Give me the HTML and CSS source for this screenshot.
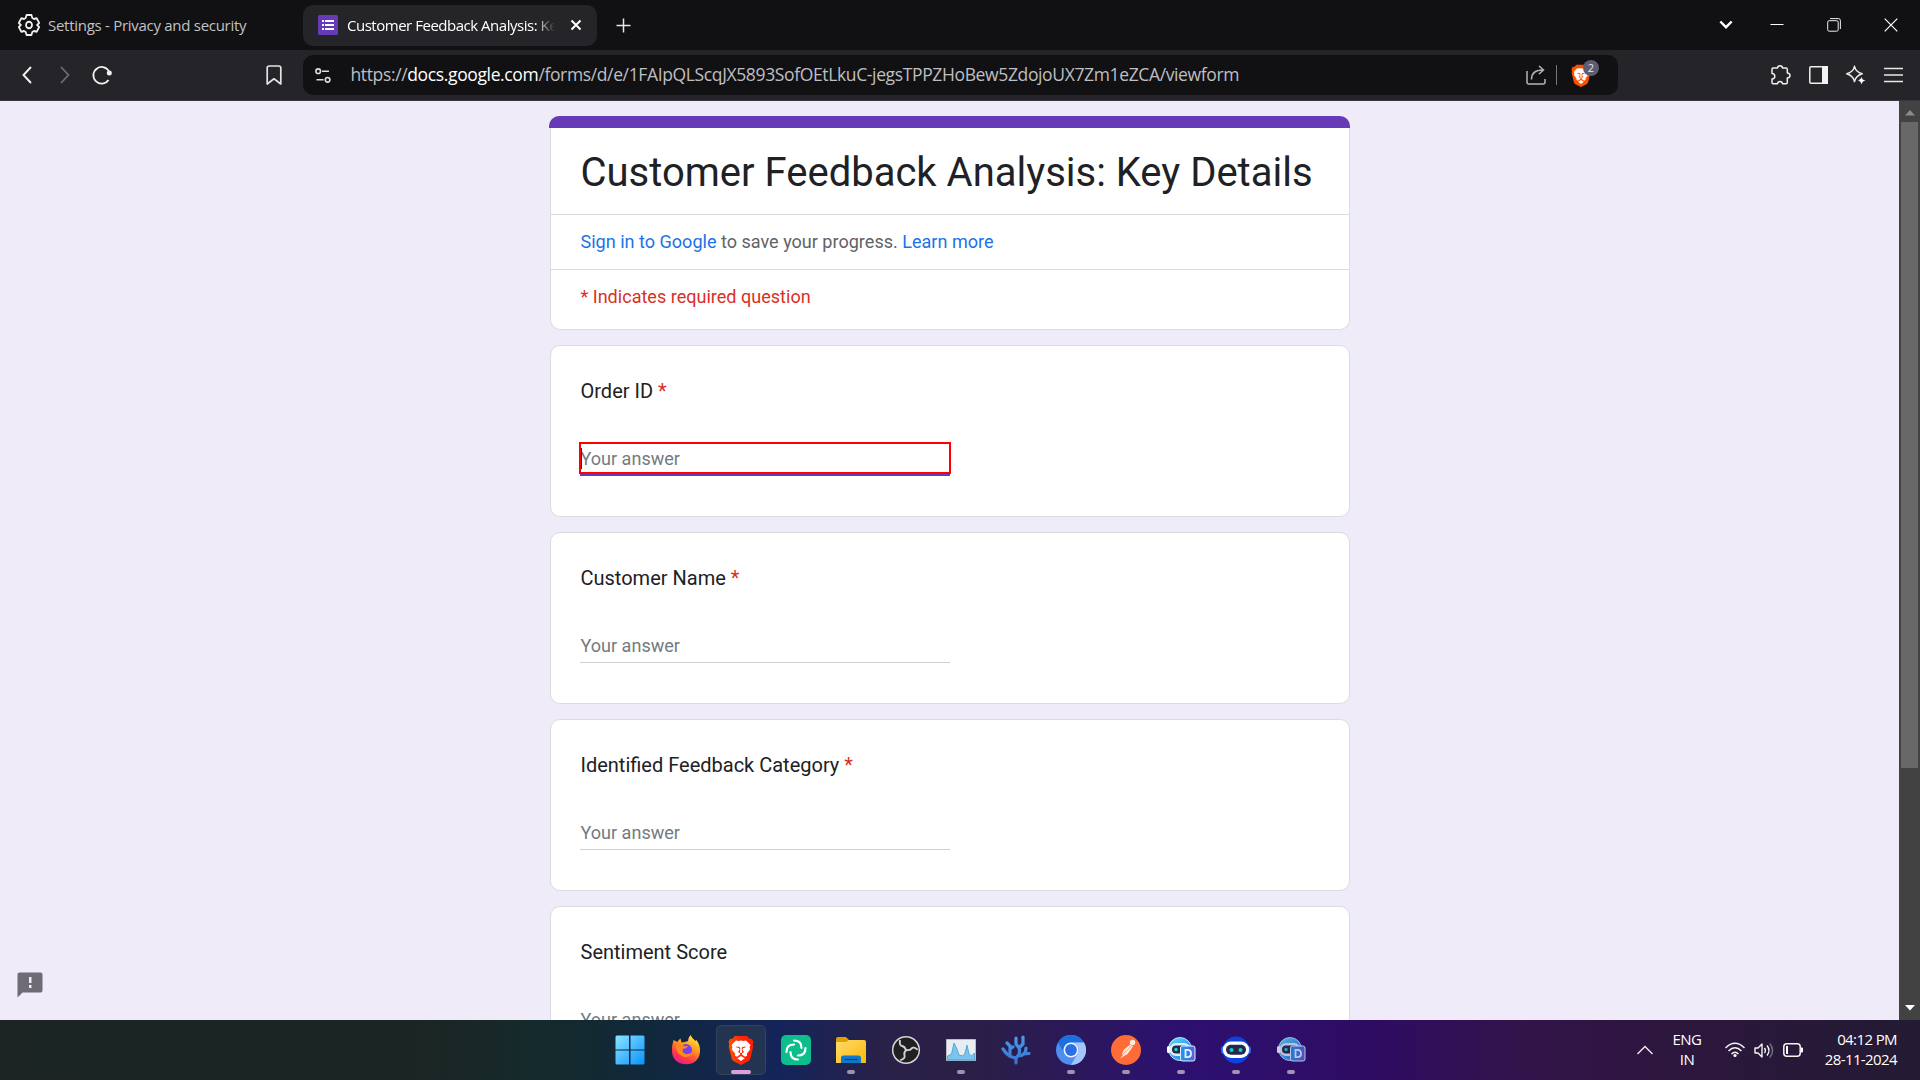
FILE: index.html
```html
<!DOCTYPE html>
<html lang="en">
<head>
<meta charset="utf-8">
<title>Customer Feedback Analysis: Key Details</title>
<link rel="stylesheet" href="styles.css">
</head>
<body>
<svg class="defs" width="0" height="0" aria-hidden="true">
  <defs>
    <linearGradient id="win" x1="0" y1="0" x2="1" y2="1"><stop offset="0" stop-color="#8be5ff"/><stop offset="1" stop-color="#0892ff"/></linearGradient>
    <linearGradient id="brave" x1="0" y1="0" x2="1" y2="0"><stop offset="0" stop-color="#ff5500"/><stop offset=".45" stop-color="#ff2a0c"/><stop offset="1" stop-color="#ff1a00"/></linearGradient>
    <linearGradient id="fox" x1=".8" y1="0" x2=".3" y2="1"><stop offset="0" stop-color="#fff14a"/><stop offset=".4" stop-color="#ff9a1f"/><stop offset=".75" stop-color="#ff3b47"/><stop offset="1" stop-color="#e8198b"/></linearGradient>
    <linearGradient id="fold" x1="0" y1="0" x2="1" y2="1"><stop offset="0" stop-color="#ffdc6b"/><stop offset="1" stop-color="#fbb808"/></linearGradient>
    <linearGradient id="bot" x1="0" y1="0" x2="1" y2="1"><stop offset="0" stop-color="#5fe0ff"/><stop offset="1" stop-color="#1673e8"/></linearGradient>
    <linearGradient id="badge" x1="0" y1="0" x2="1" y2="0"><stop offset="0" stop-color="#1a9af0"/><stop offset="1" stop-color="#5560e0"/></linearGradient>
    <linearGradient id="coral" x1="0" y1="0" x2="0" y2="1"><stop offset="0" stop-color="#4a9be8"/><stop offset="1" stop-color="#3874cf"/></linearGradient>
    <symbol id="lion" viewBox="0 0 26 30">
      <path d="M7 1h12l3 3 2-.3 1.500 3.500-.8 2 .6 2-3 12.500q-.5 1.600-2 2.600L13 30l-7.300-3.700q-1.500-1-2-2.600L.7 11.200l.6-2-.8-2L2 3.700 4 4z"/>
      <path fill="#fff" d="M8 5.500l2.500.5 2.500-.6 2.500.6 2.500-.5 4.500 4.500-1 2.500.8 1.800-3.500 4.500.3 1.700-2 1.300-3.300-2.300.2-1.200 2-1.300-1.500-2.200.3-1.500 3-1-.3-.8-3 .6-.8.900.4 4.500-1.100.500-1.100-.5.400-4.500-.8-.9-3-.6-.3.800 3 1 .3 1.500-1.500 2.200 2 1.300.2 1.200-3.300 2.300-2-1.300.3-1.700-3.500-4.500.8-1.800-1-2.500z"/>
      <path fill="#fff" d="M9.300 23.300L13 21l3.700 2.300L13 26z"/>
    </symbol>
    <symbol id="robot" viewBox="0 0 30 30">
      <circle cx="14" cy="14" r="11.500" fill="url(#bot)" stroke="#dff" stroke-width=".8"/>
      <rect x="1" y="11" width="3" height="7" rx="1.500" fill="#fff"/>
      <rect x="3.500" y="8" width="21" height="13" rx="6.500" fill="#e8edf5"/>
      <rect x="6" y="10.500" width="16" height="8" rx="4" fill="#252a48"/>
      <circle cx="10" cy="14.500" r="1.700" fill="#17d4dc"/>
      <rect x="14.500" y="11" width="14.500" height="15" rx="2" fill="url(#badge)" stroke="#e6ecff"/>
      <path d="M19.500 14.800h2q3.500 0 3.500 3.700t-3.500 3.700h-2z" fill="none" stroke="#e8f2ff" stroke-width="1.800"/>
    </symbol>
  </defs>
</svg>

<header class="tabs">
  <div class="tab">
    <svg width="22" height="24" viewBox="0 0 24 24" preserveAspectRatio="none" fill="none" stroke="#f0f0f0" stroke-width="1.900" stroke-linejoin="round"><path d="M9.300 2h5.400l.9 3 1.800 1 3-.7 2.700 4.700-2.200 2 2.200 2-2.700 4.700-3-.7-1.800 1-.9 3H9.300l-.9-3-1.800-1-3 .7L.9 14l2.200-2L.9 10l2.700-4.700 3 .7 1.800-1z"/><circle cx="12" cy="12" r="3.300"/></svg>
    <span class="tab-title settings">Settings - Privacy and security</span>
  </div>
  <div class="tab active">
    <svg width="20" height="20" viewBox="0 0 20 20"><rect width="20" height="20" rx="1.500" fill="#673ab7"/><path fill="#fff" d="M4 5h2v2H4zM7 5h9v2H7zM4 9h2v2H4zM7 9h9v2H7zM4 13h2v2H4zM7 13h9v2H7z"/></svg>
    <span class="tab-title feedback">Customer Feedback Analysis: Key Details</span>
    <svg class="tab-close" width="12" height="12" viewBox="0 0 12 12" stroke="#fff" stroke-width="2"><path d="M1.500 1.500l9 9M10.500 1.500l-9 9"/></svg>
  </div>
  <svg class="new-tab" width="15" height="15" viewBox="0 0 15 15" stroke="#e8e8e8" stroke-width="1.500"><path d="M7.500 .5v14M.5 7.500h14"/></svg>
  <div class="window-controls">
    <svg width="14" height="10" viewBox="0 0 14 10" fill="none" stroke="#fff" stroke-width="2.400"><path d="M1.300 1.500L7 7.200l5.700-5.700"/></svg>
    <svg width="14" height="14" viewBox="0 0 14 14"><path d="M.5 6.500h13" stroke="#fff"/></svg>
    <svg width="14" height="14" viewBox="0 0 14 14" fill="none" stroke="#eee"><rect x=".7" y="2.700" width="10.500" height="10.500" rx="1.500"/><path d="M3 .6h8.500q1.900 0 1.900 1.900V11"/></svg>
    <svg width="14" height="14" viewBox="0 0 14 14" stroke="#fff" stroke-width="1.200"><path d="M.7.7l12.600 12.600M13.300.7L.7 13.300"/></svg>
  </div>
</header>

<nav class="toolbar">
  <div class="nav-buttons">
    <svg width="10" height="18" viewBox="0 0 10 18" fill="none" stroke="#f2f2f2" stroke-width="1.900"><path d="M9 1L1.500 9 9 17"/></svg>
    <svg class="forward" width="10" height="18" viewBox="0 0 10 18" fill="none" stroke="#707074" stroke-width="1.700"><path d="M1 1l7.500 8L1 17"/></svg>
    <svg class="reload" width="20" height="20" viewBox="0 0 20 20"><path d="M17.300 7A8.300 8.300 0 1 0 16.500 15" fill="none" stroke="#f2f2f2" stroke-width="1.800"/><circle cx="17.300" cy="8" r="2.500" fill="#f2f2f2"/></svg>
    <svg class="bookmark" width="16" height="20" viewBox="0 0 16 20" fill="none" stroke="#e3e3e6" stroke-width="1.700" stroke-linejoin="round"><path d="M1.200 3q0-2 2-2h9.600q2 0 2 2v16L8 13.800 1.200 19z"/></svg>
  </div>
  <div class="address">
    <svg width="16" height="15" viewBox="0 0 16 15" fill="none" stroke="#dedee0" stroke-width="1.600"><circle cx="3.200" cy="3.200" r="2.300"/><path d="M7 3.200h7M1.500 11.800h7"/><circle cx="12.600" cy="11.800" r="2.300"/></svg>
    <span class="url">https://<b>docs.google.com</b>/forms/d/e/1FAIpQLScqJX5893SofOEtLkuC-jegsTPPZHoBew5ZdojoUX7Zm1eZCA/viewform</span>
    <div class="address-actions">
      <svg width="20" height="20" viewBox="0 0 20 20" fill="none" stroke="#b4b4b8" stroke-width="1.500"><path d="M1 6v11q0 2 2 2h14q2 0 2-2v-3"/><path d="M5.500 14.500q0-9.500 11-9.500M13 1l4.500 4-4.500 4"/></svg>
      <i class="divider"></i>
      <div class="shield"><svg width="20" height="23" fill="#ff5000"><use href="#lion"/></svg><span class="count">2</span></div>
    </div>
  </div>
  <div class="tools">
    <svg width="20" height="20" viewBox="0 0 20 20" fill="none" stroke="#eee" stroke-width="1.500" stroke-linejoin="round"><path d="M1 4q0-1 1-1h4.500q.2-2.200 2.500-2.200T11.500 3H15q1.300 0 1.300 1.300V8q2.700.2 2.700 2.500T16.300 13v4.500q0 1.300-1.300 1.300h-3.500q-.2-2.300-2.500-2.300t-2.500 2.300H2q-1 0-1-1V14q2.800-.2 2.800-2.800T1 8.500z"/></svg>
    <svg width="19" height="18" viewBox="0 0 19 18"><rect x=".8" y=".8" width="17.400" height="16.400" rx="1" fill="none" stroke="#eee" stroke-width="1.500"/><path d="M13 0h6v18h-6z" fill="#f3f3f3"/></svg>
    <svg width="20" height="20" viewBox="0 0 20 20"><path d="M8.500 1.300q1 5.500 7.700 7.500-6.500 2-7.700 7.700-1.200-5.700-7.700-7.700 6.700-2 7.700-7.500z" fill="none" stroke="#eee" stroke-width="1.500" stroke-linejoin="round"/><path d="M15.500 12q.6 3 4 3.500-3.400.6-4 4-.6-3.400-3.500-4 2.900-.5 3.500-3.500z" fill="#fff"/></svg>
    <svg width="19" height="16" viewBox="0 0 19 16" stroke="#e8e8e8" stroke-width="1.600"><path d="M0 1.500h19M0 8h19M0 14.500h19"/></svg>
  </div>
</nav>

<main class="page">
  <aside class="report">
    <svg width="26" height="26" viewBox="0 0 26 26"><path fill="#6f6b74" d="M2.500.5h21q2 0 2 2v16q0 2-2 2h-18l-5 5v-23q0-2 2-2z"/><path fill="#efebf8" d="M12 5h2.500v6H12zm0 8h2.500v3H12z"/></svg>
  </aside>
  <div class="form">
    <section class="card head">
      <div class="strip"></div>
      <h1 class="title">Customer Feedback Analysis: Key Details</h1>
      <p class="note"><a>Sign in to Google</a> to save your progress. <a>Learn more</a></p>
      <p class="note required">* Indicates required question</p>
    </section>
    <section class="card">
      <h2 class="question">Order ID <em>*</em></h2>
      <div class="answer focused">Your answer</div>
    </section>
    <section class="card">
      <h2 class="question">Customer Name <em>*</em></h2>
      <div class="answer">Your answer</div>
    </section>
    <section class="card">
      <h2 class="question">Identified Feedback Category <em>*</em></h2>
      <div class="answer">Your answer</div>
    </section>
    <section class="card">
      <h2 class="question">Sentiment Score</h2>
      <div class="answer">Your answer</div>
    </section>
  </div>
  <div class="scrollbar">
    <svg width="10" height="6" viewBox="0 0 10 6"><path d="M0 5.500L5 0l5 5.500z" fill="#8b8b8b"/></svg>
    <div class="thumb"></div>
    <svg width="10" height="6" viewBox="0 0 10 6"><path d="M0 0l5 5.500L10 0z" fill="#fff"/></svg>
  </div>
</main>

<footer class="taskbar">
  <div class="apps">
    <div class="app start"><svg width="30" height="30" viewBox="0 0 30 30" fill="url(#win)"><path d="M.5 2Q.5.500 2 .5h12v14H.5zM15.500.500H28q1.500 0 1.500 1.500v12.500h-14zM.5 15.500H14v14H2q-1.500 0-1.500-1.500zM15.500 15.500h14V28q0 1.500-1.500 1.500H15.500z"/></svg></div>
    <div class="app"><svg width="30" height="30" viewBox="0 0 30 30"><path fill="url(#fox)" d="M2.500 5l4 2q1-2.500 3-3.500l1 4q4-.5 6.500-1.500Q17 3 19.500 0q1.500 3.500 5 6l1-1q4 5.500 3.500 12Q27.500 29 15 29.300 2 28.500 1 17 .8 10 2.500 5z"/><circle cx="15" cy="15" r="6" fill="#7a3df0"/><path d="M5 10q5-1.500 9 1.500l3-.8q-1 3-5 3-1.500 3.500 2.300 5 4.700 1 7-2-2 6-8.300 5.300Q5 19 5 10z" fill="#ff8a1c"/></svg></div>
    <div class="app current"><svg width="26" height="30" fill="url(#brave)"><use href="#lion"/></svg><i></i></div>
    <div class="app"><svg width="30" height="30" viewBox="0 0 30 30"><rect width="30" height="30" rx="5" fill="#0dbd8b"/><g fill="none" stroke="#fff" stroke-width="2.200" stroke-linecap="round"><path id="arc" d="M13 5.500q7.500 0 7.500 7.500"/><use href="#arc" transform="rotate(90 15 15)"/><use href="#arc" transform="rotate(180 15 15)"/><use href="#arc" transform="rotate(270 15 15)"/></g></svg></div>
    <div class="app running"><svg width="30" height="30" viewBox="0 0 30 30"><path d="M0 4q0-2 2-2h8l3 3v5H0z" fill="#e0a000"/><path d="M0 7h10l3-2h15q2 0 2 2v21H0z" fill="url(#fold)"/><path d="M5 28v-5q0-2.500 2.500-2.500h15q2.500 0 2.500 2.500v5z" fill="#0f78cc"/><path d="M8.500 24.500h13" stroke="#073f78" stroke-width="1.200"/></svg><i></i></div>
    <div class="app"><svg width="30" height="30" viewBox="0 0 30 30"><circle cx="15" cy="15" r="13.300" fill="#201f22" stroke="#d6d6da" stroke-width="1.500"/><g fill="none" stroke="#d0d0d4" stroke-width="1.900"><path id="blade" d="M15 15.500q-1-4-4-4.500-3-.5-2-6"/><use href="#blade" transform="rotate(120 15 15)"/><use href="#blade" transform="rotate(240 15 15)"/></g></svg></div>
    <div class="app running"><svg width="30" height="30" viewBox="0 0 30 30"><path d="M.5 4.500h29v21H.5z" fill="#e8edf2" stroke="#b9bdc4"/><path d="M1.500 21l4-2 2.500-11 3 6 2 6 4 1 2-3 2-8 2 9 2.500 2 3-3v7H1.500z" fill="#79c5ef" stroke="#3294cd" stroke-width=".7"/></svg><i></i></div>
    <div class="app"><svg width="30" height="30" viewBox="0 0 30 30" fill="none" stroke="url(#coral)" stroke-width="3.200" stroke-linecap="round"><path d="M15 28v-5Q8 22 4 17M9 20V11L6 8M2 14l4 5M9 14l3-2M15 23q5-4 3-10l-3-4V3M18 13l4-4V2M17 21q8 0 8-8M22 19l6-.5"/></svg></div>
    <div class="app running"><svg width="30" height="30" viewBox="0 0 30 30"><circle cx="15" cy="15" r="15" fill="#508df0"/><path d="M2 7.500A15 15 0 0 1 28 7.500H15A7.500 7.500 0 0 0 8 18z" fill="#1b70df"/><path d="M28 7.500A15 15 0 0 1 15 30l6.500-11.200A7.500 7.500 0 0 0 15 7.500z" fill="#a4c6fb"/><circle cx="15" cy="15" r="7.500" fill="#eef4ff"/><circle cx="15" cy="15" r="5.900" fill="#2c6fe3"/></svg><i></i></div>
    <div class="app running"><svg width="30" height="30" viewBox="0 0 30 30"><circle cx="15" cy="15" r="15" fill="#ff6c37"/><circle cx="21.500" cy="7.500" r="2.700" fill="#fff2eb"/><path d="M19 9.500l3 2-5.500 7.500-7.500 4.500 3-3.500-1-1 1.500-4z" fill="#ffe7db"/><path d="M17 10l2.500 2-7.500 7" stroke="#ff8a60" fill="none" stroke-width=".7"/></svg><i></i></div>
    <div class="app running"><svg width="30" height="30"><use href="#robot"/></svg><i></i></div>
    <div class="app running"><svg width="30" height="30" viewBox="0 0 30 30"><circle cx="15" cy="15" r="13.500" fill="#0c43e0"/><rect y="11" width="30" height="8" rx="3" fill="#2366ff"/><rect x="1.800" y="6.500" width="26.400" height="16.500" rx="8.200" fill="#fff"/><rect x="5" y="9.800" width="20" height="10" rx="5" fill="#242849"/><circle cx="10.500" cy="15" r="2" fill="#16cbd6"/><circle cx="19.500" cy="15" r="2" fill="#16cbd6"/></svg><i></i></div>
    <div class="app running"><svg class="dim" width="30" height="30"><use href="#robot"/></svg><i></i></div>
  </div>
  <div class="tray">
    <svg width="16" height="10" viewBox="0 0 16 10" fill="none" stroke="#eee" stroke-width="1.400"><path d="M.5 9L8 1.500 15.500 9"/></svg>
    <div class="lang"><span>ENG</span><span>IN</span></div>
    <div class="status">
      <svg width="20" height="16" viewBox="0 0 20 16" fill="none" stroke="#f4f4f4" stroke-width="1.500"><path d="M.5 6Q10-3.500 19.500 6M3.500 9q6.500-6.500 13 0M6.500 12q3.500-3.500 7 0"/><circle cx="10" cy="13.500" r="1.600" fill="#fff" stroke="none"/></svg>
      <svg width="20" height="17" viewBox="0 0 20 17" fill="none" stroke="#f4f4f4" stroke-width="1.400"><path d="M1 6h3l4-4v13l-4-4H1z" stroke-linejoin="round"/><path d="M10.500 6q1.800 2.500 0 5M13 3.500q4 5 0 10"/><path d="M15.800 1.500q5.500 7 0 14" stroke="#77708a"/></svg>
      <svg width="21" height="14" viewBox="0 0 21 14"><rect x=".8" y=".8" width="16.400" height="12.400" rx="3" fill="none" stroke="#f4f4f4" stroke-width="1.500"/><path d="M3 3h2v8H3zM18 4.500h1q1 0 1 1v3q0 1-1 1h-1z" fill="#fff"/></svg>
    </div>
    <div class="clock"><span>04:12 PM</span><span>28-11-2024</span></div>
  </div>
</footer>
</body>
</html>
```

FILE: styles.css
```css
* { box-sizing: border-box; }

body {
  margin: 0;
  width: 1920px;
  height: 1080px;
  overflow: hidden;
  display: flex;
  flex-direction: column;
  font-family: "Open Sans", "Noto Sans", sans-serif;
}

svg { display: block; flex: none; }
.defs { position: absolute; }

/* Tab strip */
.tabs {
  height: 50px;
  flex: none;
  display: flex;
  align-items: center;
  background: #111113;
  color: #c2c2c4;
  font-size: 15px;
}
.tab {
  width: 303px;
  height: 41px;
  padding-left: 18px;
  display: flex;
  align-items: center;
}
.tab-title { white-space: nowrap; }
.settings { margin-left: 8px; letter-spacing: -.28px; }
.tab.active {
  width: 294px;
  padding: 0 14px 0 15px;
  border-radius: 10px;
  background: #252529;
  color: #fff;
}
.feedback {
  width: 208px;
  margin-left: 9px;
  overflow: hidden;
  letter-spacing: -.48px;
  -webkit-mask-image: linear-gradient(to right, #000 188px, transparent 208px);
  mask-image: linear-gradient(to right, #000 188px, transparent 208px);
}
.tab-close { margin-left: 15px; }
.new-tab { margin-left: 19px; }
.window-controls {
  margin-left: auto;
  padding-right: 22px;
  display: flex;
  align-items: center;
  gap: 43px;
}
.window-controls svg:first-child { margin-right: -6px; }

/* Toolbar */
.toolbar {
  height: 51px;
  flex: none;
  display: flex;
  align-items: center;
  background: #252529;
  border-bottom: 1px solid #38383c;
}
.nav-buttons { width: 303px; padding-left: 22px; display: flex; align-items: center; }
.forward { margin-left: 28px; }
.reload { margin-left: 22px; }
.bookmark { margin-left: 154px; }
.address {
  width: 1315px;
  height: 40px;
  padding-left: 12px;
  display: flex;
  align-items: center;
  border-radius: 10px;
  background: #111113;
}
.url {
  margin-left: 19.500px;
  padding-bottom: 2px;
  color: #bfbfc2;
  font-size: 17.5px;
  letter-spacing: -.365px;
  white-space: nowrap;
}
.url b { color: #fff; font-weight: 400; }
.address-actions { margin-left: auto; padding-right: 27px; display: flex; align-items: center; }
.divider { width: 1px; height: 20px; margin: 0 14px 0 10px; background: #77777b; }
.shield { position: relative; }
.count {
  position: absolute;
  left: 12px;
  top: -4px;
  width: 16px;
  height: 16px;
  border-radius: 50%;
  background: #5c5e70;
  color: #e6e6ee;
  font-size: 11px;
  line-height: 16px;
  text-align: center;
}
.tools { margin-left: auto; padding-right: 17.500px; display: flex; align-items: center; gap: 18px; }

/* Form page */
.page {
  height: 919px;
  flex: none;
  display: flex;
  overflow: hidden;
  background: #efebf8;
  font-family: Roboto, sans-serif;
}
.report { width: 550px; padding: 871px 0 0 17px; flex: none; }
.form {
  width: 800px;
  flex: none;
  padding-top: 15px;
  display: flex;
  flex-direction: column;
  gap: 15px;
}
.card {
  height: 172px;
  flex: none;
  padding: 0 29px;
  border: 1px solid #dadce0;
  border-radius: 10px;
  background: #fff;
}
.head { height: 214px; padding: 0; border-top: 0; }
.strip { height: 12px; margin: 0 -1px 0 -2px; border-radius: 10px 10px 0 0; background: #673ab7; }
.title {
  height: 86px;
  margin: 0;
  padding: 19px 29.500px 0;
  color: #202124;
  font-size: 40px;
  font-weight: 400;
  line-height: 52px;
  white-space: nowrap;
}
.note {
  height: 55px;
  margin: 0;
  padding: 14px 29.500px 0;
  border-top: 1px solid #dadce0;
  color: #5f6368;
  font-size: 18.060px;
  line-height: 25px;
}
.note a { color: #1a73e8; }
.note.required { color: #d93025; }
.question {
  height: 96px;
  margin: 0;
  padding: 30px 0 0 .5px;
  color: #202124;
  font-size: 20px;
  font-weight: 400;
  line-height: 30px;
}
.question em { color: #d93025; font-style: normal; }
.answer {
  width: 370px;
  height: 34px;
  padding: 2px 0 0 .5px;
  border-bottom: 1px solid #d0d1d3;
  color: #757a80;
  font-size: 18.060px;
  line-height: 30px;
}
.answer.focused {
  position: relative;
  width: 372px;
  height: 32px;
  margin-left: -1px;
  padding: 0;
  border: 2px solid #f00;
  line-height: 29px;
  text-indent: -.5px;
}
.answer.focused::before {
  content: "";
  position: absolute;
  left: 0;
  top: 4px;
  width: 1px;
  height: 21px;
  background: #202124;
}
.answer.focused::after {
  content: "";
  position: absolute;
  left: -1px;
  right: -1px;
  bottom: -4px;
  height: 2px;
  background: #673ab7;
}
.scrollbar {
  width: 21px;
  margin-left: auto;
  padding: 9px 0;
  display: flex;
  flex-direction: column;
  align-items: center;
  background: #424242;
}
.thumb { width: 17px; height: 646px; margin: 6px 0 auto; background: #686868; }

/* Taskbar */
.taskbar {
  height: 60px;
  flex: none;
  display: flex;
  color: #fff;
  background: linear-gradient(to right, #1c2524 0, #1b2524 420px, #142a2c 550px, #10283b 650px, #14245a 780px, #2a2148 890px, #2a1f47 980px, #2c1070 1180px, #2f0c62 1380px, #33134a 1520px, #2d163e 1660px, #231b33 1920px);
}
.apps { padding: 5px 0 0 602px; display: flex; }
.app {
  position: relative;
  width: 55px;
  height: 50px;
  display: flex;
  align-items: center;
  justify-content: center;
}
.app.start { width: 56px; padding-right: 1px; }
.app i {
  position: absolute;
  left: 24px;
  bottom: 1px;
  width: 8px;
  height: 4px;
  border-radius: 2px;
  background: #9d94b0;
}
.app.current {
  width: 50px;
  margin: 0 2px 0 3px;
  border: 1px solid #33435b;
  border-radius: 5px;
  background: #22344f;
}
.app.current i { left: 14px; bottom: 0; width: 20px; background: #dd9fe2; }
.dim { opacity: .8; }
.tray {
  margin-left: auto;
  padding-right: 23px;
  display: flex;
  align-items: center;
  font-size: 15px;
  line-height: 20px;
}
.lang, .clock { display: flex; flex-direction: column; padding-bottom: 2px; }
.lang { align-items: center; width: 30px; margin-left: 19px; letter-spacing: -.5px; }
.status { display: flex; align-items: center; gap: 9px; margin-left: 23px; }
.clock { width: 74px; margin-left: 19px; align-items: flex-end; letter-spacing: -.6px; }
```
